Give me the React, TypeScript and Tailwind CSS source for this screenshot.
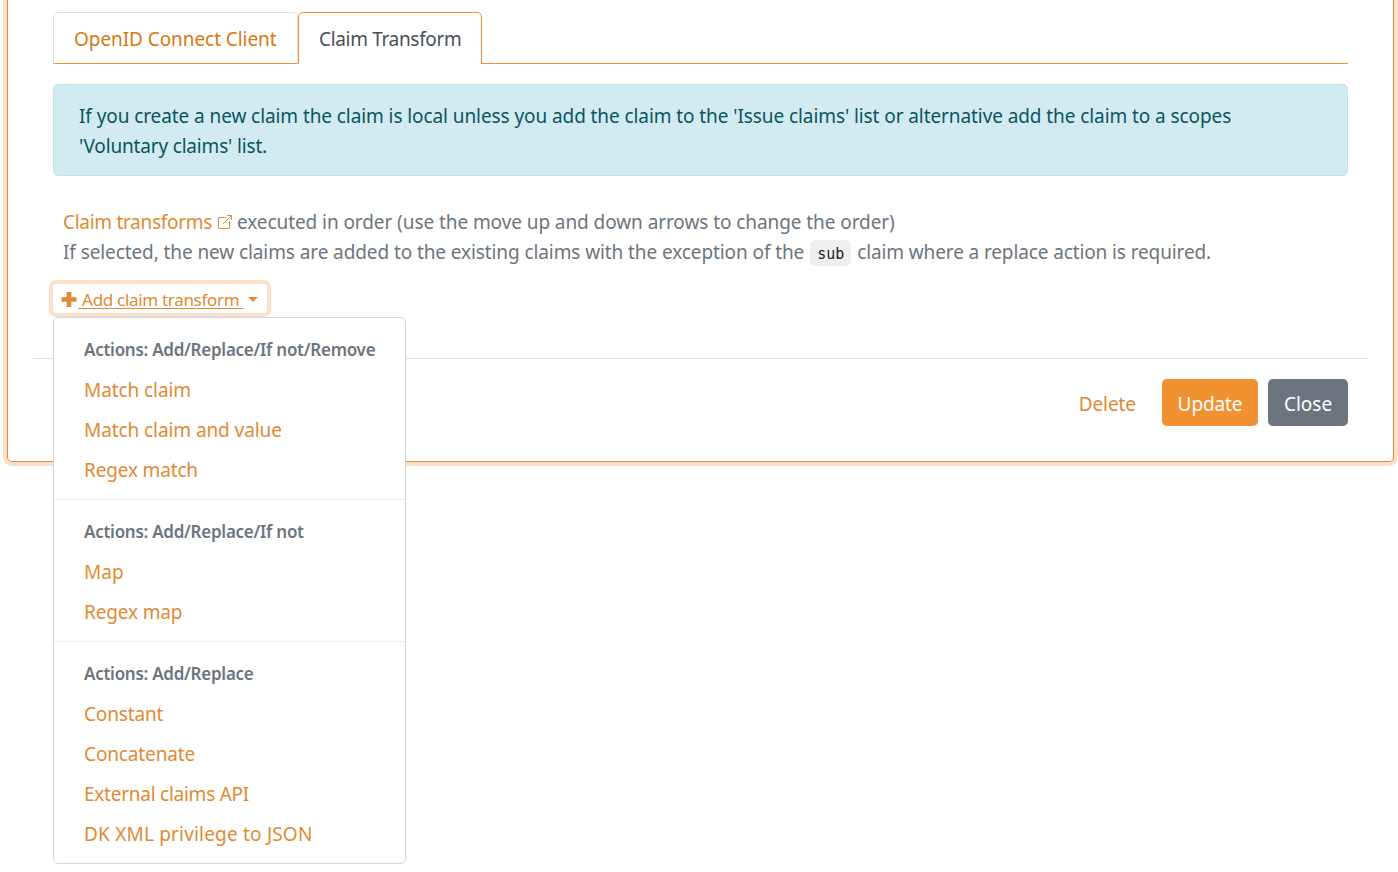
import React from "react";

const groups = [
  {
    title: "Actions: Add/Replace/If not/Remove",
    items: [
      { label: "Match claim", tracking: "tracking-[-0.08px]" },
      { label: "Match claim and value", tracking: "tracking-[-0.08px]" },
      { label: "Regex match", tracking: "tracking-[-0.16px]" },
    ],
  },
  {
    title: "Actions: Add/Replace/If not",
    items: [
      { label: "Map", tracking: "tracking-[0.1px]" },
      { label: "Regex map", tracking: "tracking-[-0.14px]" },
    ],
  },
  {
    title: "Actions: Add/Replace",
    items: [
      { label: "Constant", tracking: "tracking-[-0.15px]" },
      { label: "Concatenate", tracking: "tracking-[-0.13px]" },
      { label: "External claims API", tracking: "tracking-[-0.25px]" },
      { label: "DK XML privilege to JSON", tracking: "tracking-[0.19px]" },
    ],
  },
];

function ExternalLink() {
  return (
    <svg className="ml-[6px] mr-[5px] inline-block h-[14px] w-[14px] align-[0px] text-[#df8a34]" viewBox="0 0 14 14" fill="none" stroke="currentColor" strokeWidth="1">
      <path d="M7.5 2.5H.5v11h11v-7M9 .5h4.5V5M13.3.7 5 9" />
    </svg>
  );
}

function Menu() {
  return (
    <div className="absolute left-[4px] top-[37px] z-10 h-[547px] w-[353px] rounded-[5px] border border-[#d5d6d8] bg-white pt-[11px]">
      {groups.map((g, i) => (
        <div key={g.title} className={i ? "mt-[9px] border-t border-[#e9ecef] pt-[11px]" : ""}>
          <div className="flex h-[41px] items-center whitespace-nowrap pl-[30px] text-[17px] font-semibold tracking-[-0.26px] text-[#6c757d]">{g.title}</div>
          {g.items.map((t) => (
            <div key={t.label} className={`flex h-[40px] items-center whitespace-nowrap pl-[30px] ${t.tracking}`}>{t.label}</div>
          ))}
        </div>
      ))}
    </div>
  );
}

export default function App() {
  return (
    <div className="h-[872px] overflow-hidden bg-white pl-[7px] font-['Noto_Sans',sans-serif] text-[19px] leading-[30px] text-[#df8a34]">
      <div className="flex h-[462px] w-[1387px] flex-col rounded-b-[5px] border border-t-0 border-[#df8a34] px-[25px] shadow-[0_0_0_4px_#f9e0cb]">
        <div className="flex h-[64px] px-[20px] pt-[12px]">
          <div className="flex h-[52px] w-[245px] items-center whitespace-nowrap rounded-t-[5px] border border-[#dee2e6] border-b-[#f29132] pl-[20px] pt-[2px] tracking-[-0.07px] text-[#d9780f]">OpenID Connect Client</div>
          <div className="flex h-[52px] w-[184px] items-center whitespace-nowrap rounded-t-[5px] border border-b-0 border-[#f29132] pl-[20px] pt-[1px] tracking-[-0.33px] text-[#495057]">Claim Transform</div>
          <div className="h-[52px] flex-1 border-b border-[#f29132]" />
        </div>
        <div className="mx-[20px] mt-[20px] h-[92px] whitespace-nowrap rounded-[5px] border border-[#bee5eb] bg-[#d1ebf0] pl-[25px] pt-[16px] text-[#0c5460]">
          <p className="tracking-[-0.085px]">If you create a new claim the claim is local unless you add the claim to the 'Issue claims' list or alternative add the claim to a scopes</p>
          <p className="tracking-[-0.17px]">'Voluntary claims' list.</p>
        </div>
        <div className="mt-[31px] whitespace-nowrap pl-[30px] text-[#6c757d]">
          <p className="h-[30px]">
            <span className="tracking-[-0.3px] text-[#df8a34]">Claim transforms</span>
            <ExternalLink />
            <span className="tracking-[-0.075px]">executed in order (use the move up and down arrows to change the order)</span>
          </p>
          <p className="flex h-[30px]">
            <span className="tracking-[-0.095px]">If selected, the new claims are added to the existing claims with the exception of the</span>
            <code className="mx-[6px] mt-[3px] flex h-[26px] w-[41px] items-center justify-center rounded-[6px] bg-[#eee] pt-[2px] font-['DejaVu_Sans_Mono',monospace] text-[15px] text-[#212529]">sub</code>
            <span className="tracking-[-0.12px]">claim where a replace action is required.</span>
          </p>
        </div>
        <div className="relative ml-[16px] mt-[13px] flex h-[37px] w-[222px] items-center rounded-[7px] border-4 border-[#f9e0cb] pl-[8px] text-[17px]">
          <svg className="mt-[2px] h-[15px] w-[16px]" viewBox="0 0 15 15" fill="currentColor"><path d="M5.2 0h4.6v5.2H15v4.6H9.8V15H5.2V9.8H0V5.2h5.2z" /></svg>
          <span className="mt-[3px] whitespace-pre pl-[1px] tracking-[-0.31px] underline decoration-1 underline-offset-[2px]"> Add claim transform </span>
          <svg className="ml-[5px] mt-[2px] h-[5px] w-[10px]" viewBox="0 0 10 5" fill="currentColor"><path d="M0 0h10L5 5z" /></svg>
          <div className="absolute left-[-4px] top-[-4px] text-[19px]"><Menu /></div>
        </div>
        <div className="mt-[41px] h-px shrink-0 bg-[#dedfe3]" />
        <div className="mt-[20px] flex h-[47px] items-center justify-end gap-[10px] pr-[20px]">
          <span className="mr-[16px] pt-[3px] tracking-[-0.08px]">Delete</span>
          <span className="flex h-[47px] w-[96px] items-center justify-center rounded-[5px] bg-[#f29132] pt-[3px] tracking-[-0.12px] text-white">Update</span>
          <span className="flex h-[47px] w-[80px] items-center justify-center rounded-[5px] bg-[#6c757d] pt-[3px] text-white">Close</span>
        </div>
      </div>
    </div>
  );
}
